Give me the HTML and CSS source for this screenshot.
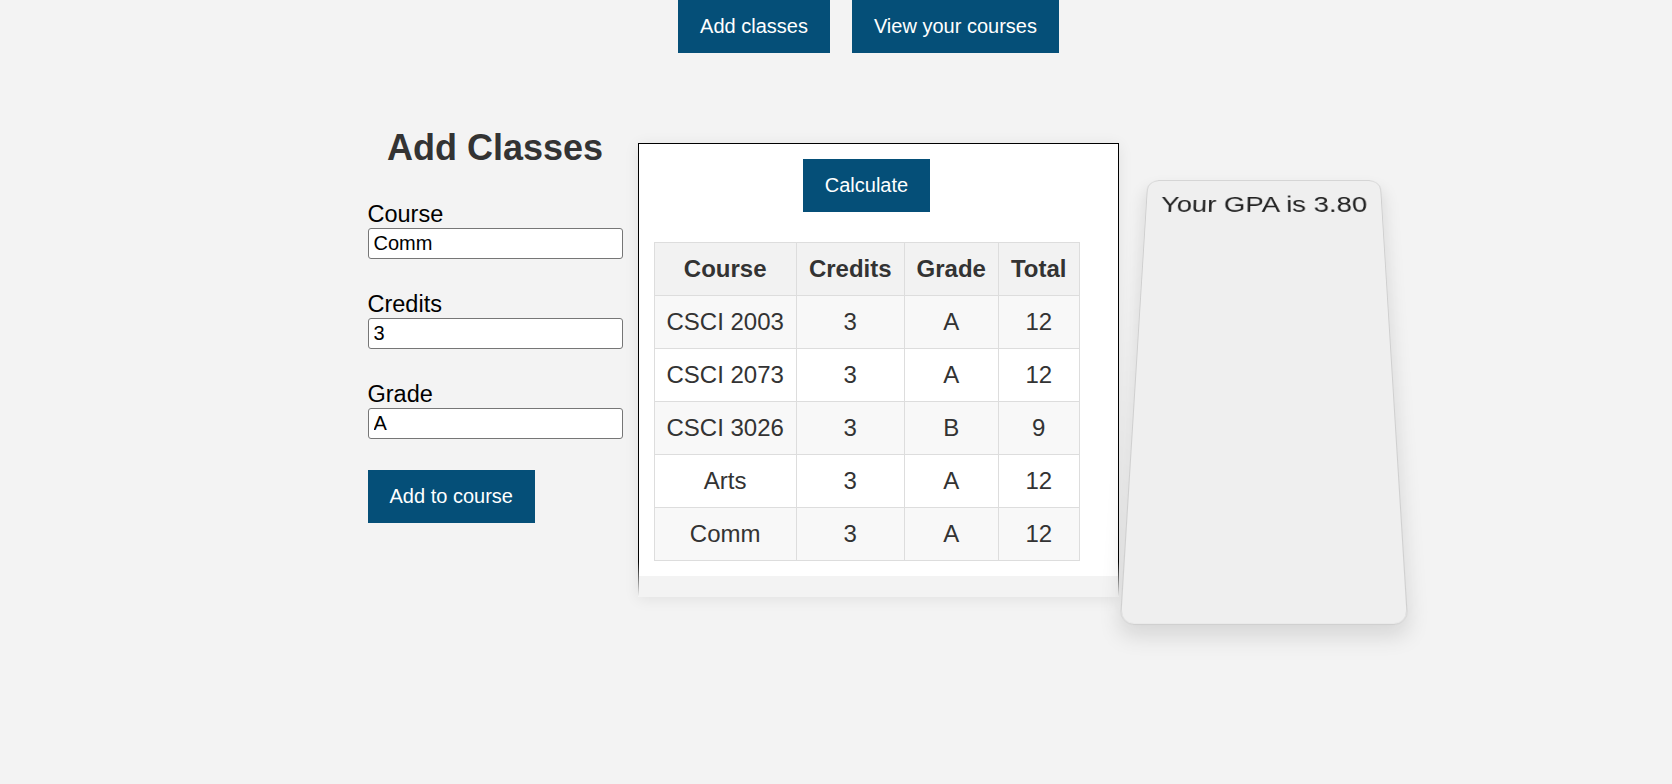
FILE: index.html
```html
<!DOCTYPE html>
<html lang="en">
<head>
<meta charset="utf-8">
<title>GPA Calculator</title>
<link rel="stylesheet" href="styles.css">
</head>
<body>
<nav class="nav">
  <button class="btn">Add classes</button>
  <button class="btn">View your courses</button>
</nav>
<main class="main">
  <section class="form-col">
    <h2 class="title">Add Classes</h2>
    <div class="field">
      <label class="label">Course</label>
      <input class="input" type="text" value="Comm">
    </div>
    <div class="field">
      <label class="label">Credits</label>
      <input class="input" type="text" value="3">
    </div>
    <div class="field field-last">
      <label class="label">Grade</label>
      <input class="input" type="text" value="A">
    </div>
    <div><button class="btn">Add to course</button></div>
  </section>
  <section class="panel">
    <div class="panel-body">
      <div class="calc-row"><button class="btn">Calculate</button></div>
      <table class="grades">
        <thead>
          <tr><th>Course</th><th>Credits</th><th>Grade</th><th>Total</th></tr>
        </thead>
        <tbody>
          <tr><td>CSCI 2003</td><td>3</td><td>A</td><td>12</td></tr>
          <tr><td>CSCI 2073</td><td>3</td><td>A</td><td>12</td></tr>
          <tr><td>CSCI 3026</td><td>3</td><td>B</td><td>9</td></tr>
          <tr><td>Arts</td><td>3</td><td>A</td><td>12</td></tr>
          <tr><td>Comm</td><td>3</td><td>A</td><td>12</td></tr>
        </tbody>
      </table>
    </div>
    <div class="panel-foot"></div>
  </section>
  <aside class="gpa-card">
    <p class="gpa-text">Your GPA is 3.80</p>
  </aside>
</main>
</body>
</html>
```

FILE: styles.css
```css
* { box-sizing: border-box; }

html, body {
  margin: 0;
  padding: 0;
}

body {
  background: #f3f3f3;
  font-family: "Liberation Sans", Arial, sans-serif;
  color: #000;
  min-height: 784px;
}

.btn {
  display: inline-block;
  border: 0;
  margin: 0;
  background: #054f78;
  color: #fff;
  font-family: "Liberation Sans", Arial, sans-serif;
  font-size: 20px;
  line-height: 23px;
  padding: 15px 22px;
  cursor: pointer;
}

.nav {
  display: flex;
  justify-content: center;
  gap: 22px;
  padding-left: 65px;
}

.main {
  display: flex;
  justify-content: center;
  align-items: flex-start;
  padding-left: 88px;
  margin-top: 74px;
}

.form-col {
  width: 255px;
  display: flex;
  flex-direction: column;
}

.title {
  margin: 0 0 32px;
  font-size: 36px;
  line-height: 41px;
  font-weight: bold;
  color: #333;
  text-align: center;
}

.field {
  display: flex;
  flex-direction: column;
  margin-bottom: 31px;
}

.field-last {
  margin-bottom: 31px;
}

.label {
  font-size: 23.5px;
  line-height: 28px;
  color: #000;
}

.input {
  width: 255px;
  height: 31px;
  margin: 0;
  border: 1px solid #767676;
  border-radius: 3px;
  background: #fff;
  padding: 1px 5px;
  font-family: "Liberation Sans", Arial, sans-serif;
  font-size: 20px;
  color: #000;
}

.panel {
  width: 481px;
  margin-left: 15px;
  margin-top: 16px;
  background: #fff;
  border: 1px solid #000;
  border-bottom: 0;
  border-image: linear-gradient(to bottom, #000 0, #000 92%, rgba(0,0,0,0) 100%) 1;
  box-shadow: 0 2px 14px rgba(0, 0, 0, 0.08);
}

.panel-body {
  padding: 15px 38px 15px 15px;
}

.calc-row {
  display: flex;
  justify-content: center;
}

.grades {
  margin-top: 30px;
  width: 426px;
  border-collapse: collapse;
  font-size: 24px;
  color: #333;
}

.grades th,
.grades td {
  border: 1px solid #ddd;
  padding: 12px 12px;
  height: 53px;
  line-height: 28px;
  text-align: center;
  white-space: nowrap;
}

.grades th {
  background: #f2f2f2;
  font-weight: bold;
}

.grades tbody tr:nth-child(odd) td {
  background: #f8f8f8;
}

.grades tbody tr:nth-child(even) td {
  background: #fff;
}

.grades th:nth-child(1) { width: 142px; }
.grades th:nth-child(2) { width: 108px; }
.grades th:nth-child(3) { width: 94px; }
.grades th:nth-child(4) { width: 82px; }

.panel-foot {
  height: 21px;
  background: #f3f3f3;
}

.gpa-card {
  width: 258px;
  height: 498px;
  margin-left: 16px;
  margin-top: 3px;
  background: #efefef;
  border: 1px solid #cfcfcf;
  border-radius: 13px;
  box-shadow: 0 10px 20px rgba(0, 0, 0, 0.12);
  transform: perspective(1100px) rotateX(28deg);
  transform-origin: 50% 50%;
  padding-top: 15px;
}

.gpa-text {
  margin: 0;
  text-align: center;
  font-size: 30px;
  line-height: 34px;
  color: #222;
}
```
